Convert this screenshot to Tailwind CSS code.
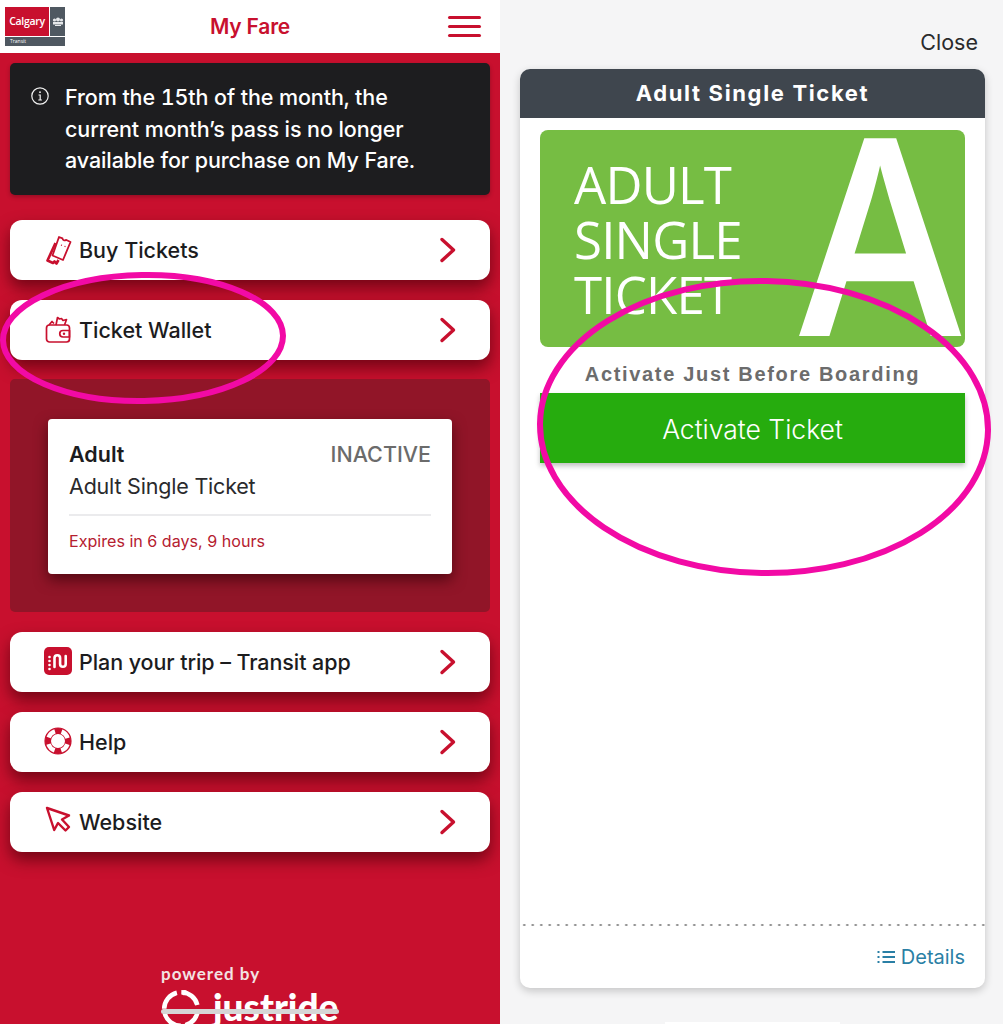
<!DOCTYPE html>
<html lang="en">
<head>
    <meta charset="UTF-8">
    <meta name="viewport" content="width=device-width, initial-scale=1.0">
    <title>My Fare - Ticket Wallet</title>
    <script src="https://cdn.jsdelivr.net/npm/@tailwindcss/browser@4"></script>
</head>
<body class="bg-[#f5f5f6] font-['Inter',sans-serif]">
<div class="relative flex w-[1003px] h-[1024px] overflow-hidden">

    <!-- Left phone -->
    <div class="w-[500px] h-full flex flex-col shrink-0">
        <header class="h-[53px] bg-white flex items-center justify-between pl-[5px] pr-[19px] shrink-0">
            <div class="w-[60px] h-[39px] flex flex-col gap-px">
                <div class="flex h-[29px] gap-px">
                    <div class="w-[44px] bg-[#c8102e] flex items-center justify-center text-white text-[10.5px] font-semibold tracking-[-0.3px] font-['Open_Sans',sans-serif]">Calgary</div>
                    <div class="flex-1 bg-[#4f5861] flex items-center justify-center">
                        <svg width="12" height="10" viewBox="0 0 12 10" fill="#e6e8ea"><circle cx="2.5" cy="3" r="1.6"/><circle cx="6" cy="2.5" r="2"/><circle cx="9.5" cy="3" r="1.6"/><rect x="1" y="5" width="10" height="2.5"/><rect x="3" y="8" width="6" height="1"/></svg>
                    </div>
                </div>
                <div class="flex-1 bg-[#4f5861] text-white text-[5px] leading-[9px] pl-[5px] font-['Open_Sans',sans-serif]">Transit</div>
            </div>
            <div class="text-[#c8102e] text-[21px] font-semibold -ml-[13px] tracking-[-0.2px]">My Fare</div>
            <div class="w-[33px] flex flex-col gap-[6px]">
                <div class="h-[3px] bg-[#c8102e] rounded-full"></div>
                <div class="h-[3px] bg-[#c8102e] rounded-full"></div>
                <div class="h-[3px] bg-[#c8102e] rounded-full"></div>
            </div>
        </header>

        <main class="flex-1 bg-[#c8102e] px-[10px] pt-[10px] flex flex-col relative overflow-hidden">
            <div class="h-[132px] shrink-0 bg-[#1d1d1f] rounded-[5px] flex pl-[21px] pt-[19px] gap-[16px] text-white text-[21.5px] leading-[31.5px] font-medium shadow-[0_2px_4px_rgba(0,0,0,0.25)]">
                <svg class="mt-[5px] shrink-0" width="18" height="18" viewBox="0 0 18 18" fill="none" stroke="#f2f2f2" stroke-width="1.2"><circle cx="9" cy="9" r="8.2"/><path d="M7.5 8h1.7v5M7.3 13h3.6" /><circle cx="9" cy="5.2" r="0.9" fill="#f2f2f2" stroke="none"/></svg>
                <div class="tracking-[-0.1px] tabular-nums">From the 15th of the month, the<br>current month’s pass is no longer<br>available for purchase on My Fare.</div>
            </div>

            <a class="mt-[25px] h-[60px] shrink-0 bg-white rounded-[12px] flex items-center pl-[35px] pr-[34px] text-[#1c1c1e] text-[21.5px] font-[550] shadow-[0_8px_16px_rgba(80,0,12,0.7)]">
                <svg class="w-[28px] h-[30px] shrink-0 mr-[6px]" viewBox="0 0 28 30" fill="none" stroke="#c8102e" stroke-width="1.8" stroke-linejoin="round"><path d="M14 2l3.5 1.4a2 2 0 0 0 3.4 1.4L25.5 7 18 25l-10.500-4.500z"/><path d="M10.500 8 2.500 25.500l5.500 2.500 1.500-1.500 2 2 2-3.500" stroke-width="2.600"/><path d="M16 10l1 .4M19.500 11.200l1 .4" stroke-width="1.200"/></svg>
                <span class="flex-1">Buy Tickets</span>
                <svg width="17" height="26" viewBox="0 0 17 26" fill="none" stroke="#c8102e" stroke-width="3.4" stroke-linecap="round" stroke-linejoin="round"><path d="M3 2.5 14.5 13 3 23.5"/></svg>
            </a>
            <a class="mt-[20px] h-[60px] shrink-0 bg-white rounded-[12px] flex items-center pl-[35px] pr-[34px] text-[#1c1c1e] text-[21.5px] font-[550] shadow-[0_8px_16px_rgba(80,0,12,0.7)]">
                <svg class="w-[28px] h-[30px] shrink-0 mr-[6px]" viewBox="0 0 28 30" fill="none" stroke="#c8102e" stroke-width="1.700" stroke-linejoin="round"><rect x="1.500" y="10" width="23" height="17" rx="3"/><path d="M18 15.500h6.500v6.500H18a3.250 3.250 0 0 1 0-6.500z"/><circle cx="19" cy="18.750" r="1.200" fill="#c8102e" stroke="none"/><path d="M4 10l3-3.500 2 2M11 10l1.500-7.500 2 1.500 2-.5 1.500 2 3.500-1-2 5.500" /></svg>
                <span class="flex-1">Ticket Wallet</span>
                <svg width="17" height="26" viewBox="0 0 17 26" fill="none" stroke="#c8102e" stroke-width="3.4" stroke-linecap="round" stroke-linejoin="round"><path d="M3 2.5 14.5 13 3 23.5"/></svg>
            </a>

            <section class="mt-[19px] h-[233px] shrink-0 bg-[#911528] rounded-[5px] pl-[38px] pr-[38px] pt-[40px]">
                <div class="h-[155px] bg-white rounded-[4px] px-[21px] pt-[21px] shadow-[0_6px_14px_rgba(50,0,8,0.65)]">
                    <div class="flex justify-between text-[21.5px] leading-[28px]">
                        <span class="font-semibold text-[#1c1c1e]">Adult</span>
                        <span class="font-[550] text-[#6b6b6b]">INACTIVE</span>
                    </div>
                    <div class="text-[21.5px] leading-[36px] text-[#2a2a2c] -tracking-[0.2px]">Adult Single Ticket</div>
                    <div class="h-[2px] bg-[#ebebed] mt-[10px]"></div>
                    <div class="mt-[14px] text-[16.1px] leading-[22px] text-[#b5202f]">Expires in 6 days, 9 hours</div>
                </div>
            </section>

            <a class="mt-[20px] h-[60px] shrink-0 bg-white rounded-[12px] flex items-center pl-[34px] pr-[34px] text-[#1c1c1e] text-[21.5px] font-[550] shadow-[0_8px_16px_rgba(80,0,12,0.7)]">
                <svg class="w-[28px] h-[28px] shrink-0 mr-[7px] -mt-[3px]" viewBox="0 0 28 28" fill="none"><rect width="28" height="28" rx="5" fill="#c8102e"/><path d="M10.500 20V11a2.800 2.800 0 0 1 5.600 0v6a2.800 2.800 0 0 0 5.600 0V9" stroke="#fff" stroke-width="2.600" stroke-linecap="round"/><g fill="#fff"><circle cx="5.500" cy="10" r="1.300"/><circle cx="5.500" cy="14" r="1.300"/><circle cx="5.500" cy="18" r="1.300"/><circle cx="5.500" cy="22" r="1.300"/></g></svg>
                <span class="flex-1 -tracking-[0.08px]">Plan your trip – Transit app</span>
                <svg width="17" height="26" viewBox="0 0 17 26" fill="none" stroke="#c8102e" stroke-width="3.4" stroke-linecap="round" stroke-linejoin="round"><path d="M3 2.5 14.5 13 3 23.5"/></svg>
            </a>
            <a class="mt-[20px] h-[60px] shrink-0 bg-white rounded-[12px] flex items-center pl-[34px] pr-[34px] text-[#1c1c1e] text-[21.5px] font-[550] shadow-[0_8px_16px_rgba(80,0,12,0.7)]">
                <svg class="w-[28px] h-[28px] shrink-0 mr-[7px] -mt-[3px]" viewBox="0 0 28 28" fill="none"><circle cx="14" cy="14" r="10" stroke="#c8102e" stroke-width="6"/><circle cx="14" cy="14" r="13" stroke="#c8102e" stroke-width="1.200"/><circle cx="14" cy="14" r="10" stroke="#fff" stroke-width="4.400" stroke-dasharray="9 6.700" stroke-dashoffset="-3.350"/></svg>
                <span class="flex-1">Help</span>
                <svg width="17" height="26" viewBox="0 0 17 26" fill="none" stroke="#c8102e" stroke-width="3.4" stroke-linecap="round" stroke-linejoin="round"><path d="M3 2.5 14.5 13 3 23.5"/></svg>
            </a>
            <a class="mt-[20px] h-[60px] shrink-0 bg-white rounded-[12px] flex items-center pl-[35px] pr-[34px] text-[#1c1c1e] text-[21.5px] font-[550] shadow-[0_8px_16px_rgba(80,0,12,0.7)]">
                <svg class="w-[28px] h-[28px] shrink-0 mr-[6px] -mt-[4px]" viewBox="0 0 28 28" fill="none" stroke="#c8102e" stroke-width="2.400" stroke-linejoin="round"><path d="M2 2 24 9.500l-7 4 7 7.500-3.500 3.500-7.500-7.500-3.800 7z"/></svg>
                <span class="flex-1">Website</span>
                <svg width="17" height="26" viewBox="0 0 17 26" fill="none" stroke="#c8102e" stroke-width="3.4" stroke-linecap="round" stroke-linejoin="round"><path d="M3 2.5 14.5 13 3 23.5"/></svg>
            </a>

            <!-- Powered by -->
            <div class="mt-[113px] ml-[151px] relative">
                <div class="text-[#f3e3e3] text-[17px] leading-[18px] font-bold tracking-[1px] font-['Lato',sans-serif]">powered by</div>
                <div class="flex items-start mt-[6px]">
                    <svg class="shrink-0" width="40" height="40" viewBox="0 0 44 44" fill="none" stroke="#fff" stroke-width="5"><circle cx="22" cy="22" r="18.5" stroke-dasharray="24 5"/><circle cx="26" cy="4" r="3" fill="#fff" stroke="none"/></svg>
                    <div class="text-white text-[37px] leading-[40px] font-black font-['Lato',sans-serif] ml-[12px] -mt-[2px]">justride</div>
                </div>
                <div class="absolute left-0 top-[44px] w-[178px] h-[5px] bg-[#d6d6d6] rounded-full"></div>
            </div>
        </main>
    </div>

    <!-- Right phone -->
    <div class="flex-1 relative flex flex-col">
        <div class="h-[69px] shrink-0 flex items-start justify-end pr-[25px] pt-[28px] text-[#2a2a2c] text-[21.5px] leading-[28px]">Close</div>
        <div class="ml-[20px] mr-[18px] h-[919px] shrink-0 bg-white rounded-[10px] shadow-[0_3px_8px_rgba(0,0,0,0.2)] flex flex-col overflow-hidden">
            <div class="h-[49px] shrink-0 bg-[#3f464e] flex items-center justify-center text-white text-[22px] font-bold tracking-[1.65px]">Adult Single Ticket</div>
            <div class="mx-[20px] mt-[12px] h-[217px] shrink-0 bg-[#76bd43] rounded-[8px] relative overflow-hidden flex justify-between font-['Open_Sans',sans-serif] text-white">
                <div class="pl-[34px] pt-[27px] text-[51px] leading-[55px] tracking-[-0.8px]">ADULT<br>SINGLE<br>TICKET</div>
                <div class="text-[276px] leading-[217px] font-semibold -mr-[6px] -mt-[9px] scale-x-[0.89]">A</div>
            </div>
            <div class="mt-[15px] text-center text-[#6c6c6c] text-[20px] leading-[24px] font-bold tracking-[1.68px] font-['Liberation_Sans',sans-serif]">Activate Just Before Boarding</div>
            <div class="mx-[20px] mt-[7px] h-[70px] shrink-0 bg-[#26ac0e] flex items-center justify-center pt-[4px] text-white text-[26.5px] font-light shadow-[0_3px_5px_rgba(0,0,0,0.25)]">Activate Ticket</div>
            <div class="flex-1"></div>
            <div class="h-[2px] bg-[radial-gradient(circle,#8a8a8a_1px,transparent_1.2px)] bg-[length:8.5px_2px]"></div>
            <div class="h-[62px] shrink-0 flex items-center justify-end pr-[20px] text-[#2a7fa5] text-[20px] gap-[6px]">
                <svg width="18" height="14" viewBox="0 0 18 14" fill="none" stroke="#2a7fa5" stroke-width="1.8"><path d="M5.5 2H18M5.5 7H18M5.5 12H18"/><path d="M0.5 2h2M0.5 7h2M0.5 12h2"/></svg>
                <span>Details</span>
            </div>
        </div>
        <div class="absolute left-[165px] top-[1022px] w-[175px] h-[2px] bg-white"></div>
    </div>

    <!-- Hand-drawn annotation ellipses -->
    <svg class="absolute left-0 top-0 pointer-events-none" width="1003" height="1024" fill="none" stroke="#f20aa5" stroke-width="6">
        <ellipse cx="143" cy="338" rx="140" ry="63" transform="rotate(-1 143 338)"/>
        <ellipse cx="764" cy="427" rx="224" ry="146" transform="rotate(1 764 427)"/>
    </svg>
</div>
</body>
</html>
